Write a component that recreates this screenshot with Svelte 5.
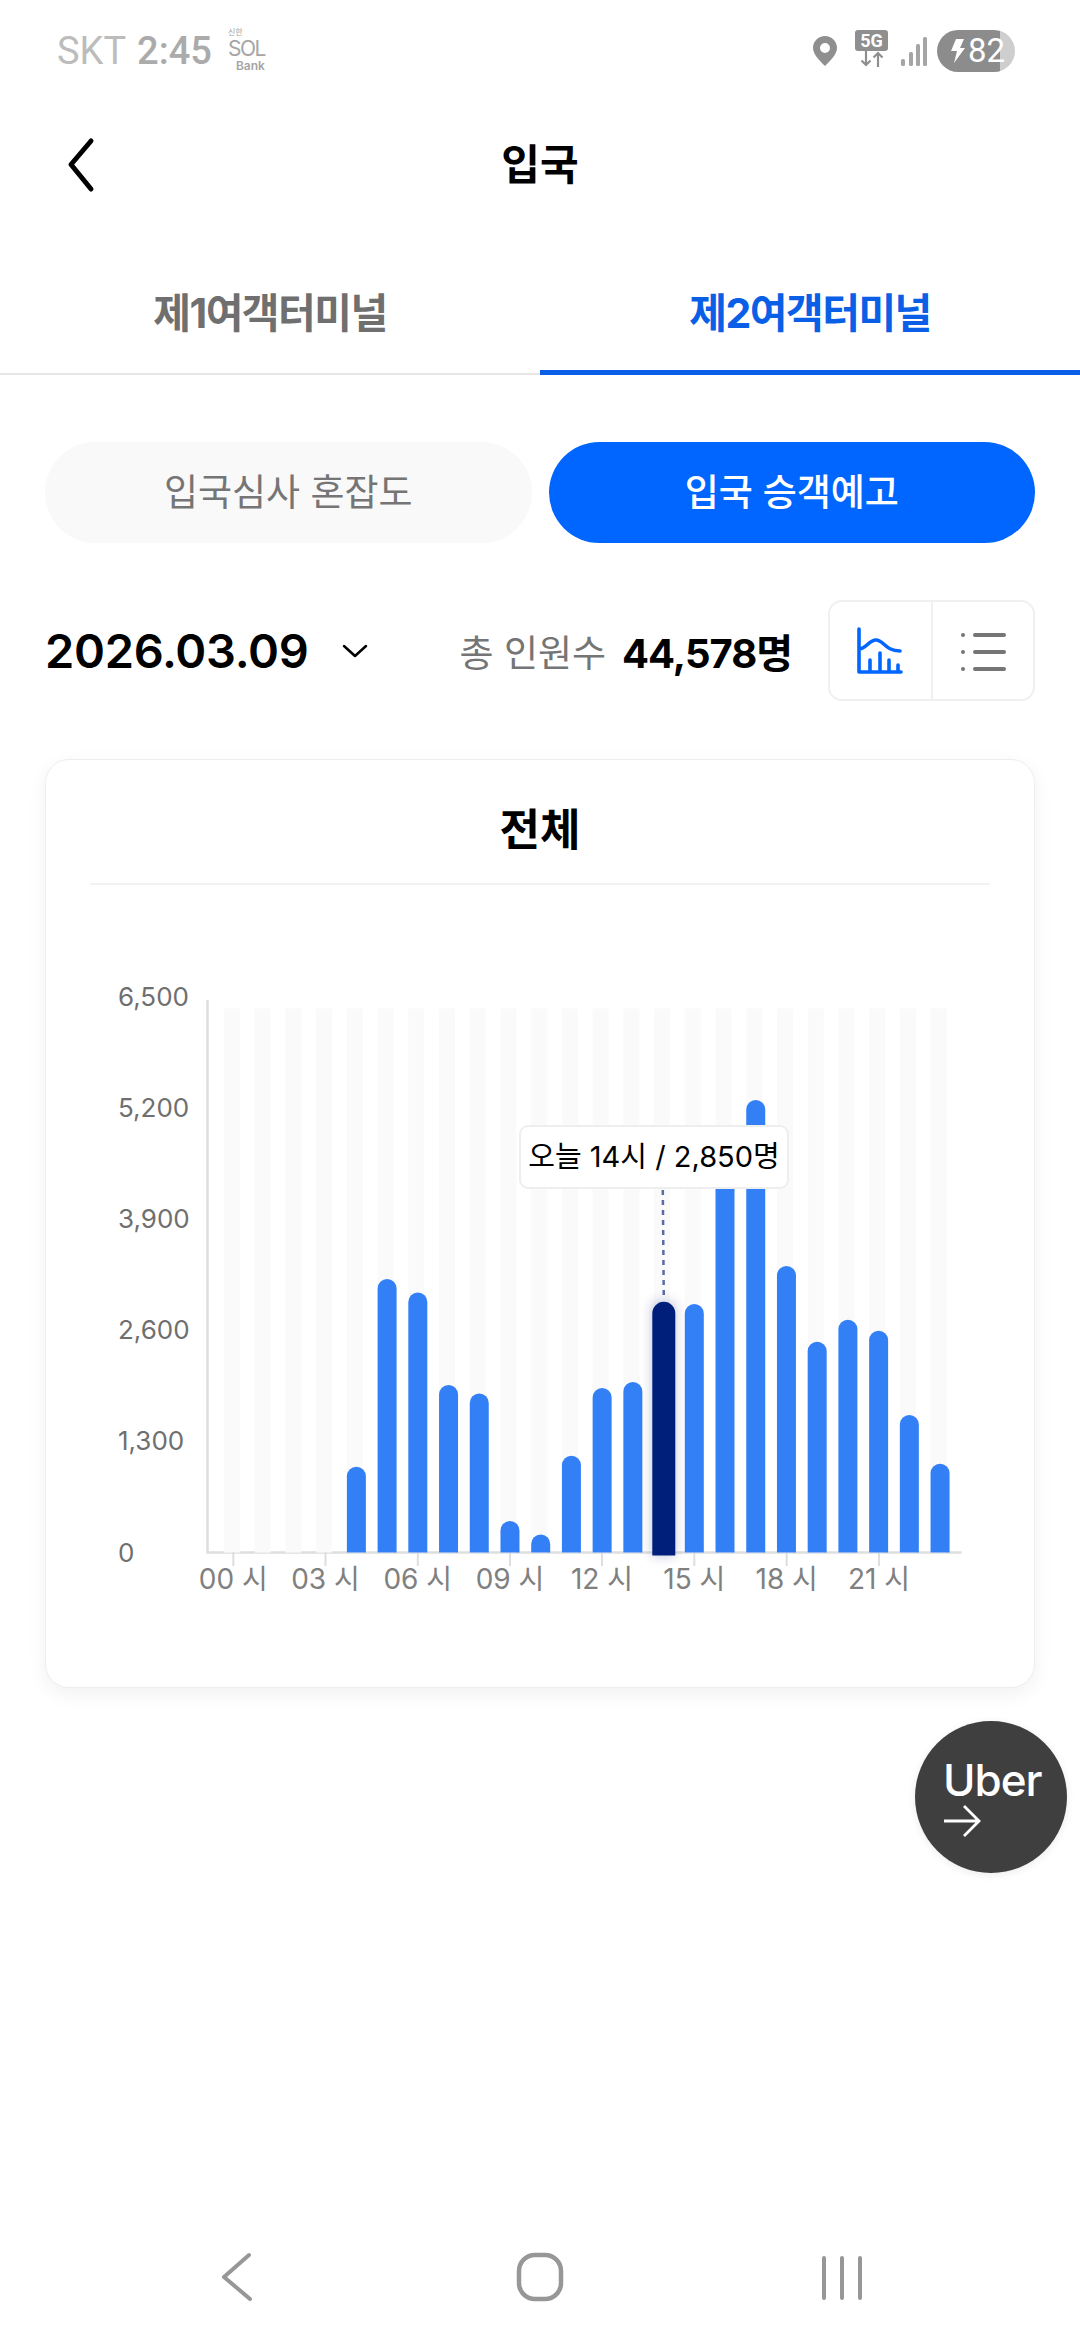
<script>
  const tops = [1552, 1552, 1552, 1552, 1466.7, 1279, 1292.5, 1385, 1393.5, 1521, 1534.5, 1455.8, 1388, 1382, 1301.8, 1304, 1150, 1100, 1266, 1341.7, 1319.8, 1330.8, 1415, 1463.8];
  const pitch = 30.72;
  const left = (i) => 224 + pitch * i;
  const axisY = 1552.6;
  const yTicks = [
    ['6,500', 997], ['5,200', 1108], ['3,900', 1218.8], ['2,600', 1330], ['1,300', 1440.6], ['0', 1552.6]
  ];
  const xTicks = [['00 시', 233.3], ['03 시', 325.5], ['06 시', 417.8], ['09 시', 510], ['12 시', 602], ['15 시', 694.3], ['18 시', 786.7], ['21 시', 879]];
  const barPath = (x, top, w, bottom) => {
    const r = w / 2;
    return `M${x} ${bottom}V${top + r}A${r} ${r} 0 0 1 ${x + w} ${top + r}V${bottom}Z`;
  };
</script>

<div class="page">
  <div class="status">
    <div class="status-left">
      <span class="carrier">SKT</span>
      <span class="clock">2:45</span>
      <div class="sol">
        <span class="sol-ko">신한</span>
        <span class="sol-name">SOL</span>
        <span class="sol-bank">Bank</span>
      </div>
    </div>
    <div class="status-right">
      <svg class="pin" width="24" height="30" viewBox="0 0 24 30"><path fill-rule="evenodd" fill="#8f8f8f" d="M12 0C5.4 0 0 5.2 0 11.8 0 19 7.5 25.500 12 30c4.500-4.500 12-11 12-18.200C24 5.200 18.600 0 12 0Zm0 7a5 5 0 1 1 0 10 5 5 0 0 1 0-10Z"/></svg>
      <div class="net">
        <span class="five-g">5G</span>
        <svg width="24" height="16" viewBox="0 0 24 16" fill="none" stroke="#8f8f8f" stroke-width="2.200"><path d="M6 0v14M1.500 9.500 6 14l4.500-4.500M18 16V2M13.500 6.500 18 2l4.500 4.500"/></svg>
      </div>
      <svg class="signal" width="28" height="30" viewBox="0 0 28 30" fill="#a5a5a5"><rect x="1" y="22" width="4" height="7" rx="1.500"/><rect x="9" y="15" width="4" height="14" rx="1.500"/><rect x="16" y="7" width="4" height="22" rx="1.500"/><rect x="23" y="0" width="4" height="29" rx="1.500"/></svg>
      <div class="battery">
        <svg width="14" height="24" viewBox="0 0 14 24" fill="#fff"><path d="M5 0h8L9 9h5L3 24l3-12H0Z"/></svg>
        <span class="level">82</span>
      </div>
    </div>
  </div>

  <header class="topbar">
    <svg class="back" width="32" height="56" viewBox="0 0 32 56" fill="none" stroke="#000" stroke-width="5" stroke-linecap="round" stroke-linejoin="round"><path d="M26 4 6 27.500 26 52"/></svg>
    <h1>입국</h1>
  </header>

  <nav class="tabs">
    <div class="tab">제1여객터미널</div>
    <div class="tab active">제2여객터미널</div>
  </nav>

  <div class="pills">
    <div class="pill">입국심사 혼잡도</div>
    <div class="pill on">입국 승객예고</div>
  </div>

  <div class="filter">
    <div class="date">2026.03.09</div>
    <svg class="caret" width="26" height="14" viewBox="0 0 26 14" fill="none" stroke="#000" stroke-width="2.500" stroke-linecap="round" stroke-linejoin="round"><path d="M2 2 13 12 24 2"/></svg>
    <div class="total">
      <span class="total-label">총 인원수</span>
      <strong>44,578명</strong>
    </div>
    <div class="toggle">
      <div class="toggle-btn">
        <svg width="48" height="48" viewBox="0 0 48 48" fill="none" stroke="#0066ff" stroke-width="3.600" stroke-linecap="round" stroke-linejoin="round"><path d="M3 2v43h42M3 22c7 0 10-9 17-9 8 0 9 11 24 11M14 45V33M24 45V26M33 45V33M42 45V38"/></svg>
      </div>
      <div class="toggle-btn">
        <svg width="48" height="48" viewBox="0 0 48 48" fill="none" stroke="#757575" stroke-width="4" stroke-linecap="round"><path d="M16 8h29M16 25h29M16 42h29"/><g fill="#757575" stroke="none"><circle cx="4" cy="8" r="2"/><circle cx="4" cy="25" r="2"/><circle cx="4" cy="42" r="2"/></g></svg>
      </div>
    </div>
  </div>

  <section class="card">
    <h2>전체</h2>
    <div class="chart">
      <svg width="988" height="690" viewBox="46 950 988 690">
        <path d="M207.500 1000V1552.600H961.500" fill="none" stroke="#dedede" stroke-width="2.500" />
        {#each tops as _, i}
          <rect x={left(i)} y="1008.400" width="16" height={axisY - 1008.400} fill="#fafafa" />
        {/each}
        {#each xTicks as t}
          <line x1={t[1]} x2={t[1]} y1="1552" y2="1566" stroke="#dedede" stroke-width="2" />
          <text class="xl" x={t[1]} y="1589" text-anchor="middle">{t[0]}</text>
        {/each}
        {#each yTicks as t}
          <text class="yl" x="118" y={t[1] + 9}>{t[0]}</text>
        {/each}
        {#each tops as top, i}
          {#if i > 3 && i !== 14}
            <path d={barPath(left(i), top, 19, axisY)} fill="#3380f6" />
          {/if}
        {/each}
        <defs>
          <filter id="glow" x="-100%" y="-10%" width="300%" height="120%"><feGaussianBlur stdDeviation="6" /></filter>
        </defs>
        <rect x="652" y="1302" width="23" height="254" fill="#001f7a" opacity=".25" filter="url(#glow)" />
        <path d={barPath(652.300, 1301.800, 23, 1555.500)} fill="#001f7a" />
        <line x1="662.800" y1="1190" x2="663.800" y2="1300" stroke="#5a6aa6" stroke-width="2.500" stroke-dasharray="5 5" />
      </svg>
      <div class="tip">오늘 14시 / 2,850명</div>
    </div>
  </section>

  <div class="uber">
    <span>Uber</span>
    <svg width="38" height="34" viewBox="0 0 38 34" fill="none" stroke="#fff" stroke-width="2.800"><path d="M1 17h35M21 2l15 15-15 15"/></svg>
  </div>

  <footer class="nav">
    <svg width="34" height="50" viewBox="0 0 34 50" fill="none" stroke="#979797" stroke-width="4" stroke-linecap="round" stroke-linejoin="round"><path d="M28 3 3 25l26 22"/></svg>
    <svg width="50" height="50" viewBox="0 0 50 50" fill="none" stroke="#979797" stroke-width="4.500"><rect x="4" y="3" width="42" height="44" rx="16"/></svg>
    <svg width="44" height="46" viewBox="0 0 44 46" fill="none" stroke="#979797" stroke-width="4" stroke-linecap="round"><path d="M4 3v40M22 3v40M40 3v40"/></svg>
  </footer>
</div>

<style>
  :global(body) {
    margin: 0;
    background: #fff;
  }
  .page {
    position: relative;
    width: 1080px;
    height: 2340px;
    display: flex;
    flex-direction: column;
    background: #fff;
    overflow: hidden;
    font-family: Inter, "Noto Sans CJK KR", sans-serif;
    color: #000;
  }
  .status {
    height: 100px;
    box-sizing: border-box;
    padding: 30px 65px 0 57px;
    display: flex;
    justify-content: space-between;
    align-items: flex-start;
  }
  .status-left {
    display: flex;
    align-items: center;
    gap: 11px;
    height: 42px;
    font-family: Roboto, sans-serif;
    font-size: 38px;
    line-height: 42px;
  }
  .carrier {
    color: #bcbcbc;
  }
  .clock {
    color: #ababab;
    font-weight: 500;
  }
  .sol {
    width: 40px;
    margin-left: 5px;
    height: 46px;
    display: flex;
    flex-direction: column;
    color: #a5a5a5;
    font-family: Inter, "Noto Sans CJK KR", sans-serif;
    line-height: 1;
  }
  .sol-ko {
    font-size: 8px;
    height: 10px;
  }
  .sol-name {
    font-size: 21px;
    height: 22px;
    letter-spacing: -1.500px;
  }
  .sol-bank {
    font-size: 12px;
    font-weight: 600;
    padding-left: 8px;
  }
  .status-right {
    display: flex;
    align-items: flex-start;
  }
  .pin {
    margin-top: 6px;
  }
  .net {
    margin-left: 18px;
    width: 33px;
    display: flex;
    flex-direction: column;
    align-items: center;
  }
  .five-g {
    width: 33px;
    height: 21px;
    border-radius: 3px;
    background: #8f8f8f;
    color: #fff;
    font-size: 18px;
    font-weight: 700;
    line-height: 21px;
    text-align: center;
    font-family: Roboto, sans-serif;
  }
  .signal {
    margin: 7px 0 0 12px;
  }
  .battery {
    margin-left: 9px;
    width: 78px;
    height: 42px;
    box-sizing: border-box;
    padding-left: 14px;
    border-radius: 21px;
    display: flex;
    align-items: center;
    gap: 3px;
    background: linear-gradient(to right, #8c8c8c 63px, #cecece 63px);
    overflow: hidden;
  }
  .level {
    color: #fff;
    font-family: Roboto, sans-serif;
    font-size: 33px;
    line-height: 42px;
    width: 33px;
    flex: none;
  }
  .topbar {
    height: 130px;
    display: flex;
    align-items: center;
    justify-content: center;
    position: relative;
  }
  .back {
    position: absolute;
    left: 65px;
    top: 37px;
  }
  h1 {
    margin: 0;
    font-size: 42px;
    font-weight: 700;
    line-height: 1;
  }
  .tabs {
    height: 145px;
    box-sizing: border-box;
    display: flex;
  }
  .tab {
    flex: 1;
    box-sizing: border-box;
    height: 145px;
    border-bottom: 2px solid #e6e6e6;
    padding-top: 61px;
    text-align: center;
    font-size: 41px;
    line-height: 44px;
    font-weight: 700;
    color: #6f6f6f;
    letter-spacing: -1.500px;
  }
  .tab.active {
    border-bottom: 5px solid #0a5fe6;
    color: #0a5fe6;
  }
  .pills {
    margin: 67px 45px 0;
    display: flex;
    gap: 17px;
  }
  .pill {
    flex: 1;
    height: 101px;
    border-radius: 51px;
    background: #f9f9f9;
    color: #757575;
    font-size: 37px;
    line-height: 101px;
    text-align: center;
    font-weight: 400;
  }
  .pill.on {
    background: #0066ff;
    color: #fff;
    font-weight: 500;
  }
  .filter {
    margin: 57px 45px 0 45px;
    height: 101px;
    display: flex;
    align-items: center;
  }
  .date {
    font-size: 47px;
    font-weight: 600;
    letter-spacing: -0.300px;
  }
  .caret {
    margin-left: 33px;
  }
  .total {
    margin-left: auto;
    margin-right: 36px;
    display: flex;
    align-items: center;
    gap: 16px;
  }
  .total-label {
    font-size: 37px;
    color: #757575;
  }
  .total strong {
    font-size: 40px;
    font-weight: 700;
    letter-spacing: -1px;
  }
  .toggle {
    width: 207px;
    height: 101px;
    box-sizing: border-box;
    border: 2px solid #f0f0f0;
    border-radius: 14px;
    display: flex;
  }
  .toggle-btn {
    flex: 1;
    display: flex;
    align-items: center;
    justify-content: center;
  }
  .toggle-btn + .toggle-btn {
    border-left: 2px solid #f0f0f0;
  }
  .card {
    margin: 58px 45px 0;
    height: 929px;
    box-sizing: border-box;
    border: 1px solid #eee;
    border-radius: 24px;
    box-shadow: 0 6px 20px rgba(0, 0, 0, 0.06);
    background: #fff;
  }
  h2 {
    margin: 0 44px;
    height: 125px;
    box-sizing: border-box;
    padding-top: 47px;
    border-bottom: 2px solid #f2f2f2;
    text-align: center;
    font-size: 44px;
    line-height: 46px;
    font-weight: 700;
  }
  .chart {
    position: relative;
    margin-top: 65px;
    height: 690px;
  }
  .chart svg {
    display: block;
  }
  .yl {
    font-size: 26px;
    fill: #6f6f6f;
  }
  .xl {
    font-size: 28px;
    fill: #808080;
  }
  .tip {
    position: absolute;
    left: 473px;
    top: 175px;
    width: 270px;
    height: 64px;
    box-sizing: border-box;
    border: 2px solid #eee;
    border-radius: 9px;
    background: #fff;
    text-align: center;
    font-size: 29px;
    line-height: 60px;
    white-space: nowrap;
  }
  .uber {
    position: absolute;
    left: 915px;
    top: 1721px;
    width: 152px;
    height: 152px;
    box-sizing: border-box;
    padding: 35px 0 0 28px;
    border-radius: 50%;
    background: #3f3f3f;
    color: #fff;
    box-shadow: 0 2px 8px rgba(0, 0, 0, 0.08);
  }
  .uber span {
    display: block;
    font-size: 44px;
    line-height: 48px;
    font-weight: 500;
    letter-spacing: -1px;
  }
  .uber svg {
    display: block;
    margin-top: 0;
  }
  .nav {
    position: absolute;
    left: 0;
    right: 0;
    top: 2252px;
    height: 50px;
  }
  .nav svg {
    position: absolute;
    top: 0;
  }
  .nav svg:nth-child(1) {
    left: 221px;
  }
  .nav svg:nth-child(2) {
    left: 515px;
  }
  .nav svg:nth-child(3) {
    left: 820px;
    top: 3px;
  }
</style>
